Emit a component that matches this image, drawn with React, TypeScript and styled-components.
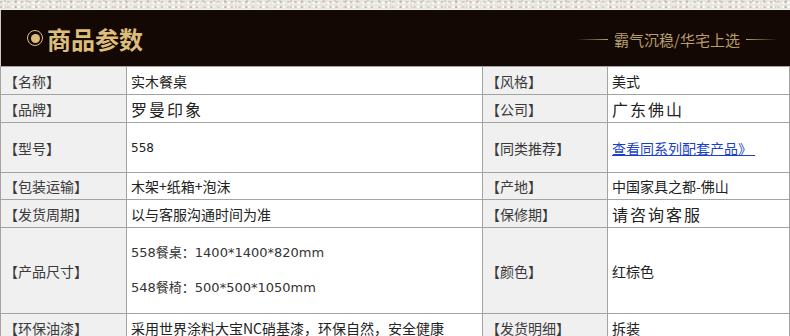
import React from "react";
import styled, { createGlobalStyle } from "styled-components";

const Global = createGlobalStyle`
  html, body { margin: 0; padding: 0; background: #ffffff; }
  body { font-family: "Noto Sans CJK SC", "Noto Sans", sans-serif; }
`;

const Page = styled.div`
  width: 790px;
  overflow: hidden;
`;

const Texture = styled.div`
  height: 10px;
  background-color: #e9e6df;
  background-image:
    radial-gradient(circle at 20% 40%, rgba(150,140,120,0.35) 0 1px, transparent 1.5px),
    radial-gradient(circle at 70% 70%, rgba(255,255,255,0.8) 0 1px, transparent 1.5px),
    radial-gradient(circle at 45% 20%, rgba(160,150,130,0.3) 0 1px, transparent 1.5px);
  background-size: 7px 5px, 5px 4px, 11px 6px;
  border-bottom: 1px solid #f4f2ee;
  box-sizing: border-box;
`;

const Banner = styled.div`
  height: 56px;
  background: #140804;
  display: flex;
  align-items: center;
  justify-content: space-between;
  padding: 0 12px 0 26px;
  border-left: 1px solid #cfc9bf;
`;

const Title = styled.div`
  display: flex;
  align-items: center;
  gap: 4px;
  color: #dcbd7a;
  font-size: 24px;
  font-weight: 700;
`;

const Dot = styled.span`
  width: 14px;
  height: 14px;
  border: 1.5px solid #dcbd7a;
  border-radius: 50%;
  display: flex;
  align-items: center;
  justify-content: center;
  &::after {
    content: "";
    width: 9px;
    height: 9px;
    border-radius: 50%;
    background: #dcbd7a;
  }
`;

const Slogan = styled.div`
  display: flex;
  align-items: center;
  gap: 6px;
  color: #b59d6c;
  font-size: 15px;
  padding-top: 2px;
`;

const Rule = styled.span<{ $dir: "left" | "right" }>`
  display: block;
  width: 32px;
  height: 1px;
  background: linear-gradient(
    ${(p) => (p.$dir === "left" ? "to right" : "to left")},
    rgba(181, 157, 108, 0),
    #b59d6c
  );
`;

const Table = styled.table`
  border-collapse: collapse;
  width: 789px;
  table-layout: fixed;
`;

const Row = styled.tr<{ $h: number }>`
  height: ${(p) => p.$h}px;
`;

const Label = styled.td`
  background: #f0f0f0;
  border: 1px solid #a3a3a3;
  color: #3a3a3a;
  font-size: 14px;
  padding: 0 0 0 3px;
  white-space: nowrap;
  vertical-align: middle;
`;

const Value = styled.td<{ $size?: number; $serif?: boolean; $latin?: boolean }>`
  background: #ffffff;
  border: 1px solid #a3a3a3;
  color: #222;
  font-family: ${(p) =>
    p.$latin
      ? `"DejaVu Sans", "Noto Sans CJK SC", sans-serif`
      : `"Noto Sans CJK SC", "Noto Sans", sans-serif`};
  font-size: ${(p) => p.$size ?? 14}px;
  letter-spacing: ${(p) => (p.$serif ? "2px" : "0")};
  padding: 0 0 0 4px;
  white-space: nowrap;
  vertical-align: middle;
`;

const Para = styled.p`
  margin: 0;
  font-size: 13px;
  color: #333;
  line-height: 20px;
  & + & { margin-top: 15px; }
`;

const Link = styled.a`
  color: #1a3fc7;
  text-decoration: underline;
  font-size: 14px;
`;

export default function App() {
  return (
    <Page>
      <Global />
      <Texture />
      <Banner>
        <Title>
          <Dot />
          <span>商品参数</span>
        </Title>
        <Slogan>
          <Rule $dir="left" />
          <span>霸气沉稳/华宅上选</span>
          <Rule $dir="right" />
        </Slogan>
      </Banner>
      <Table>
        <colgroup>
          <col style={{ width: 126 }} />
          <col style={{ width: 356 }} />
          <col style={{ width: 125 }} />
          <col style={{ width: 182 }} />
        </colgroup>
        <tbody>
          <Row $h={28}>
            <Label>【名称】</Label>
            <Value>实木餐桌</Value>
            <Label>【风格】</Label>
            <Value>美式</Value>
          </Row>
          <Row $h={28}>
            <Label>【品牌】</Label>
            <Value $size={16} $serif>罗曼印象</Value>
            <Label>【公司】</Label>
            <Value $size={16} $serif>广东佛山</Value>
          </Row>
          <Row $h={50}>
            <Label>【型号】</Label>
            <Value $size={12} $latin>558</Value>
            <Label>【同类推荐】</Label>
            <Value>
              <Link href="#">查看同系列配套产品》&nbsp;</Link>
            </Value>
          </Row>
          <Row $h={27}>
            <Label>【包装运输】</Label>
            <Value>木架+纸箱+泡沫</Value>
            <Label>【产地】</Label>
            <Value>中国家具之都-佛山</Value>
          </Row>
          <Row $h={28}>
            <Label>【发货周期】</Label>
            <Value>以与客服沟通时间为准</Value>
            <Label>【保修期】</Label>
            <Value $size={16} $serif>请咨询客服</Value>
          </Row>
          <Row $h={86}>
            <Label>【产品尺寸】</Label>
            <Value $latin>
              <Para>558餐桌：1400*1400*820mm</Para>
              <Para>548餐椅：500*500*1050mm</Para>
            </Value>
            <Label>【颜色】</Label>
            <Value>红棕色</Value>
          </Row>
          <Row $h={28}>
            <Label>【环保油漆】</Label>
            <Value>采用世界涂料大宝NC硝基漆，环保自然，安全健康</Value>
            <Label>【发货明细】</Label>
            <Value>拆装</Value>
          </Row>
        </tbody>
      </Table>
    </Page>
  );
}
